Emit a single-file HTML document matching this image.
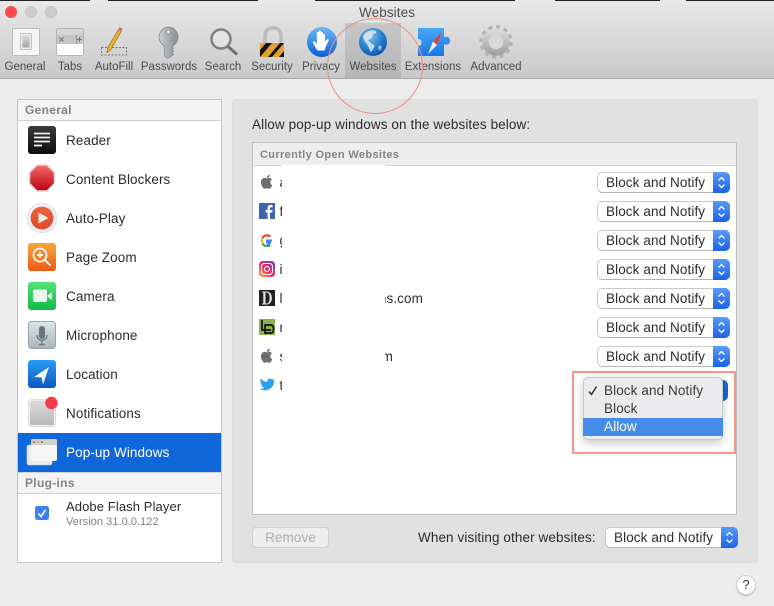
<!DOCTYPE html>
<html><head><meta charset="utf-8"><title>Websites</title>
<style>
*{box-sizing:border-box;margin:0;padding:0}
html,body{width:774px;height:606px;overflow:hidden}
body{position:relative;background:#ececec;font-family:"Liberation Sans",sans-serif;font-size:13.5px;color:#2b2b2b;letter-spacing:.1px}
.a{position:absolute}
.t{position:absolute;white-space:nowrap;line-height:16px}
.tb{position:absolute;top:61px;width:70px;text-align:center;font-size:11.5px;line-height:13px;color:#4a4a4a;letter-spacing:0;white-space:nowrap}
.s{position:absolute;left:66px;white-space:nowrap;line-height:16px}
.p{position:absolute;left:597px;width:133px;height:21px;background:#fff;border:1px solid #c9c9c9;border-bottom-color:#b5b5b5;border-radius:5px;line-height:19px;padding-left:8px;white-space:nowrap}
.p i{position:absolute;right:-1px;top:-1px;width:17px;height:21px;background:linear-gradient(#5a9bf8,#1a62e8);border-radius:0 5px 5px 0}
.p svg{position:absolute;right:-1px;top:-1px}
.u{position:absolute;left:279.5px;white-space:nowrap;line-height:16px}
</style></head><body>

<div class="a" style="left:0;top:0;width:774px;height:79px;background:linear-gradient(#e9e9e9,#c9c9c9);border-bottom:1px solid #a9a9a9"></div>
<div class="a" style="left:0;top:0;width:90px;height:1px;background:#222"></div>
<div class="a" style="left:108px;top:0;width:150px;height:1px;background:#222"></div>
<div class="a" style="left:315px;top:0;width:200px;height:1px;background:#222"></div>
<div class="a" style="left:555px;top:0;width:105px;height:1px;background:#222"></div>
<div class="a" style="left:686px;top:0;width:88px;height:1px;background:#222"></div>

<div class="a" style="left:5px;top:6px;width:12px;height:12px;border-radius:50%;background:#fb4b4e"></div>
<div class="a" style="left:25px;top:6px;width:12px;height:12px;border-radius:50%;background:#cdcdcd;border:1px solid #c2c2c2"></div>
<div class="a" style="left:45px;top:6px;width:12px;height:12px;border-radius:50%;background:#cdcdcd;border:1px solid #c2c2c2"></div>
<div class="t" style="left:359px;top:5px;color:#4b4b4b">Websites</div>

<div class="a" style="left:345px;top:23px;width:56px;height:55px;background:linear-gradient(#c6c6c6,#b6b6b6)"></div>

<svg class="a" style="left:0;top:20px" width="520" height="45" viewBox="0 20 520 45">
  <defs>
    <linearGradient id="g1" x1="0" y1="0" x2="0" y2="1"><stop offset="0" stop-color="#6cb6f2"/><stop offset="1" stop-color="#0a60d8"/></linearGradient>
    <radialGradient id="gl" cx=".4" cy=".3" r=".8"><stop offset="0" stop-color="#7fc0ee"/><stop offset=".6" stop-color="#1c78cc"/><stop offset="1" stop-color="#0a4a9a"/></radialGradient>
    <linearGradient id="gk" x1="0" y1="0" x2="1" y2="0"><stop offset="0" stop-color="#c9d1d4"/><stop offset=".5" stop-color="#a4adb0"/><stop offset="1" stop-color="#868e91"/></linearGradient>
    <linearGradient id="gb" x1="0" y1="0" x2="0" y2="1"><stop offset="0" stop-color="#45a8f8"/><stop offset="1" stop-color="#1a78e8"/></linearGradient>
    <linearGradient id="gg" x1="0" y1="0" x2="0" y2="1"><stop offset="0" stop-color="#d8d8d8"/><stop offset="1" stop-color="#a4a4a4"/></linearGradient>
  </defs>
  <!-- General -->
  <rect x="12.5" y="28.5" width="27" height="27" fill="#f6f6f6" stroke="#bcbcbc"/>
  <rect x="20.5" y="33.5" width="11" height="16" fill="#eee" stroke="#c2c2c2" rx="1"/>
  <rect x="22.5" y="35.5" width="7" height="12" fill="url(#gg)"/>
  <!-- Tabs -->
  <rect x="56.5" y="28.5" width="27" height="27" rx="2" fill="#fff" stroke="#b5b5b5"/>
  <rect x="57" y="29" width="26" height="6" fill="#d5d5d5"/>
  <rect x="57" y="35" width="26" height="9" fill="#c4c4c4"/>
  <path d="M76.5 35v9" stroke="#999"/>
  <path d="M59.5 37.5l4 4M63.5 37.5l-4 4M77 39.5h5M79.5 37v5" stroke="#777" fill="none"/>
  <!-- AutoFill -->
  <rect x="101.5" y="47.5" width="25" height="7.5" fill="none" stroke="#777" stroke-dasharray="2 1.5"/>
  <path d="M107 52.500l.3-4 11-19 3 1.800-11 19z" fill="#f0b030" stroke="#8a6510" stroke-width=".6"/>
  <path d="M118.500 29l1-1.800 3 1.800-1 1.800z" fill="#d8568a"/>
  <!-- Key -->
  <path d="M169 27a10 10 0 0 0-4.500 18.900V56l3.500 2.500 3.500-2.500 2-1.500-1.500-1.500 1.500-1.500-1.500-1.500 1.500-1.500-1-1v-1.600A10 10 0 0 0 169 27z" fill="url(#gk)" stroke="#7d8588" stroke-width=".7"/>
  <circle cx="168.500" cy="32" r="2" fill="#e4e4e4" stroke="#777" stroke-width=".6"/>
  <!-- Search -->
  <circle cx="221" cy="39" r="9.500" fill="#f2f2f2" fill-opacity=".4" stroke="#808080" stroke-width="2.500"/>
  <path d="M228 46.500l9 8" stroke="#707070" stroke-width="3"/>
  <!-- Security -->
  <path d="M265 43v-7c0-11 16-11 16 0v7" fill="none" stroke="#bcbcbc" stroke-width="3.500"/>
  <rect x="260" y="43" width="24" height="14" rx="1" fill="#e2a030"/>
  <path d="M260 50l6-7h6l-12 14zM268 57l12-14h4l-12 14zM279 57l5-6v6z" fill="#111"/>
  <!-- Privacy -->
  <circle cx="322" cy="42" r="15" fill="url(#g1)"/>
  <path d="M317 50l-4-7c-.7-1.500 1-2.500 2-1.300l1.800 2V33c0-1.500 2-1.500 2 0v-1.500c0-1.500 2.200-1.500 2.200 0V33c0-1.500 2-1.500 2 0v2c0-1.500 2-1.500 2 0v6.500l1.800-2c1.200-1 2.500 0 1.700 1.500l-2.500 5-1.500 4.500h-6.500z" fill="#fff"/>
  <!-- Websites globe -->
  <circle cx="373" cy="42" r="14" fill="url(#gl)"/>
  <path d="M363 36c3-5 9-7 13-5 1 2-1 3-3 3 0 3-2 5-5 6l4 4c2 0 3 2 2 4-2 3-3 5-4 3-1-3-2-5-3-7-2-2-4-5-4-8z" fill="#f2f2ea" fill-opacity=".75"/>
  <path d="M378 46c2-1 4 0 4 2l-3 3z" fill="#eee" fill-opacity=".6"/>
  <!-- Extensions -->
  <path d="M418 28h26v9h2c3-1 4 2 4 4s-1 4-4 3.500h-2V56h-26V46c2.500 0 3.500-1.500 3.500-3.500S420.500 39 418 39z" fill="url(#gb)"/>
  <path d="M441.500 33L433 41.500l4 3.500z" fill="#e8402a"/>
  <path d="M428 54l5-12.500 4 3.500z" fill="#f2f2f2"/>
  <!-- Advanced -->
  <circle cx="496" cy="42" r="15" fill="none" stroke="#b4b4b4" stroke-width="3.500" stroke-dasharray="4 3.850"/>
  <circle cx="496" cy="42" r="10.500" fill="none" stroke="url(#gg)" stroke-width="6.500"/>
  <circle cx="496" cy="42" r="7.200" fill="#d8d8d8"/>
</svg>

<div class="tb" style="left:-10px">General</div>
<div class="tb" style="left:35px">Tabs</div>
<div class="tb" style="left:79px">AutoFill</div>
<div class="tb" style="left:134px">Passwords</div>
<div class="tb" style="left:188px">Search</div>
<div class="tb" style="left:237px">Security</div>
<div class="tb" style="left:286px">Privacy</div>
<div class="tb" style="left:338px">Websites</div>
<div class="tb" style="left:398px">Extensions</div>
<div class="tb" style="left:461px">Advanced</div>

<!-- sidebar -->
<div class="a" style="left:17px;top:99px;width:205px;height:464px;background:#fff;border:1px solid #c4c4c4"></div>
<div class="a" style="left:18px;top:100px;width:203px;height:21px;background:#f4f4f4;border-bottom:1px solid #d0d0d0"></div>
<div class="t" style="left:25px;top:102px;font-weight:bold;font-size:12px;color:#848484;letter-spacing:.3px">General</div>
<div class="a" style="left:18px;top:433px;width:203px;height:39px;background:#0f67da"></div>
<div class="a" style="left:18px;top:472px;width:203px;height:22px;background:#f4f4f4;border-top:1px solid #d0d0d0;border-bottom:1px solid #d0d0d0"></div>
<div class="t" style="left:25px;top:475px;font-weight:bold;font-size:12px;color:#848484;letter-spacing:.3px">Plug-ins</div>

<div class="s" style="top:133px">Reader</div>
<div class="s" style="top:172px">Content Blockers</div>
<div class="s" style="top:211px">Auto-Play</div>
<div class="s" style="top:250px">Page Zoom</div>
<div class="s" style="top:289px">Camera</div>
<div class="s" style="top:328px">Microphone</div>
<div class="s" style="top:367px">Location</div>
<div class="s" style="top:406px">Notifications</div>
<div class="s" style="top:445px;color:#fff">Pop-up Windows</div>
<div class="s" style="top:499px;font-size:13px">Adobe Flash Player</div>
<div class="s" style="top:515px;font-size:11px;color:#808080;line-height:14px;letter-spacing:.05px">Version 31.0.0.122</div>

<svg class="a" style="left:0;top:120px" width="60" height="420" viewBox="0 120 60 420">
  <defs>
    <linearGradient id="r1" x1="0" y1="0" x2="0" y2="1"><stop offset="0" stop-color="#3a3a3a"/><stop offset="1" stop-color="#0d0d0d"/></linearGradient>
    <linearGradient id="r2" x1="0" y1="0" x2="0" y2="1"><stop offset="0" stop-color="#f76a6a"/><stop offset="1" stop-color="#bb0010"/></linearGradient>
    <linearGradient id="r3" x1="0" y1="0" x2="0" y2="1"><stop offset="0" stop-color="#ee6540"/><stop offset="1" stop-color="#dd4a2a"/></linearGradient>
    <linearGradient id="r4" x1="0" y1="0" x2="0" y2="1"><stop offset="0" stop-color="#fba63c"/><stop offset="1" stop-color="#ec5a18"/></linearGradient>
    <linearGradient id="r5" x1="0" y1="0" x2="0" y2="1"><stop offset="0" stop-color="#55e27a"/><stop offset="1" stop-color="#10bb48"/></linearGradient>
    <linearGradient id="r6" x1="0" y1="0" x2="0" y2="1"><stop offset="0" stop-color="#d8e8ee"/><stop offset="1" stop-color="#a8b4b8"/></linearGradient>
    <linearGradient id="r7" x1="0" y1="0" x2="0" y2="1"><stop offset="0" stop-color="#2a9cf2"/><stop offset="1" stop-color="#0a58c0"/></linearGradient>
    <linearGradient id="r8" x1="0" y1="0" x2="0" y2="1"><stop offset="0" stop-color="#dcdcdc"/><stop offset="1" stop-color="#b8b8b8"/></linearGradient>
  </defs>
  <!-- reader -->
  <rect x="28" y="126" width="28" height="28" rx="3" fill="url(#r1)"/>
  <path d="M34 133.500h16M34 137.500h16M34 141.500h16M34 145.500h8" stroke="#f2f2f2" stroke-width="1.700"/>
  <!-- blockers -->
  <path d="M37 165h10l7.500 7.500v11L47 191H37l-7.500-7.500v-11z" fill="url(#r2)" stroke="#dcdcdc" stroke-width="1.500"/>
  <!-- autoplay -->
  <circle cx="42" cy="218" r="14.500" fill="#f6f6f6" stroke="#dcdcdc"/>
  <circle cx="42" cy="218" r="11.500" fill="url(#r3)"/>
  <path d="M38.500 212.500l10 5.500-10 5.500z" fill="#f4ece8"/>
  <!-- zoom -->
  <rect x="28" y="243" width="28" height="28" rx="3" fill="url(#r4)"/>
  <circle cx="40" cy="255" r="6.500" fill="none" stroke="#fff" stroke-width="1.700"/>
  <path d="M37 255h6M40 252v6M45 260l5.500 5.500" stroke="#fff" stroke-width="1.700"/>
  <!-- camera -->
  <rect x="28" y="282" width="28" height="28" rx="3" fill="url(#r5)"/>
  <rect x="33" y="289.500" width="14" height="12.500" rx="2" fill="#eef6ef"/>
  <path d="M47 296l5-4v8z" fill="#eef6ef"/>
  <!-- mic -->
  <rect x="28.500" y="321.500" width="27" height="27" rx="3" fill="url(#r6)" stroke="#9aa4a8"/>
  <rect x="39" y="326" width="6" height="13" rx="3" fill="#6a7478"/>
  <path d="M37 335c0 7 10 7 10 0M42 340v4M39 344.500h6" fill="none" stroke="#6a7478" stroke-width="1.200"/>
  <!-- location -->
  <rect x="28" y="360" width="28" height="28" rx="3" fill="url(#r7)"/>
  <path d="M49 367l-15 10 7.500.5 1.500 7z" fill="#f2f6fa"/>
  <!-- notifications -->
  <rect x="28.500" y="399.500" width="27" height="27" rx="3" fill="#f0f0f0" stroke="#dcdcdc"/>
  <rect x="30" y="401" width="24" height="24" rx="1.500" fill="url(#r8)"/>
  <circle cx="51.500" cy="403" r="6.200" fill="#f23a48"/>
  <!-- popup -->
  <rect x="27" y="445" width="25" height="20" rx="2" fill="#e9e9e9" stroke="#cfd8e6" stroke-width=".6"/>
  <rect x="31" y="439" width="26" height="22" rx="2" fill="#f6f6f6"/>
  <path d="M31 445v-4a2 2 0 0 1 2-2h22a2 2 0 0 1 2 2v4z" fill="#d0d0d0"/>
  <circle cx="34" cy="442" r="1.100" fill="#e85a50"/><circle cx="38" cy="442" r="1.100" fill="#e8b040"/><circle cx="42" cy="442" r="1.100" fill="#50b050"/>
  <!-- checkbox -->
  <rect x="35" y="506" width="14" height="14" rx="2.500" fill="#3a82f0"/>
  <path d="M38.500 513.500l2.500 3 4.500-6.500" fill="none" stroke="#fff" stroke-width="1.600"/>
</svg>

<!-- right panel -->
<div class="a" style="left:232px;top:99px;width:526px;height:464px;background:#e1e1e1;border:1px solid #dcdcdc;border-radius:4px"></div>
<div class="t" style="left:252px;top:117px">Allow pop-up windows on the websites below:</div>
<div class="a" style="left:252px;top:142px;width:485px;height:373px;background:#fff;border:1px solid #c0c0c0"></div>
<div class="a" style="left:253px;top:143px;width:483px;height:23px;background:#eeeeee;border-bottom:1px solid #d6d6d6"></div>
<div class="t" style="left:260px;top:148px;font-weight:bold;font-size:11px;line-height:15px;color:#848484;letter-spacing:.35px">Currently Open Websites</div>

<div class="u" style="top:175px">apple.com</div>
<div class="u" style="top:204px">facebook.com</div>
<div class="u" style="top:233px">google.com</div>
<div class="u" style="top:262px">instagram.com</div>
<div class="u" style="top:291px">l</div>
<div class="u" style="top:320px">news.com</div>
<div class="u" style="top:349px">support.com</div>
<div class="u" style="top:378px">twitter.com</div>
<div class="a" style="left:282px;top:165px;width:103px;height:232px;background:#fff"></div>
<div class="t" style="left:378px;top:291px;width:45px;text-align:right;overflow:hidden">ns.com</div>
<div class="a" style="left:378px;top:291px;width:7px;height:16px;background:#fff"></div>
<div class="t" style="left:378px;top:349px;width:15px;text-align:right;overflow:hidden">m</div>
<div class="a" style="left:378px;top:349px;width:7px;height:16px;background:#fff"></div>

<svg class="a" style="left:255px;top:170px" width="25" height="225" viewBox="255 170 25 225">
  <!-- apple -->
  <g fill="#6e6e6e"><path d="M267 178.500c-1.500-.8-2.800-.7-3.800-.2-2 1-3 4-1.500 7.200.8 1.800 2 3.300 3 3.300.8 0 1.300-.6 2.300-.6s1.500.6 2.300.6c1.200 0 2.300-1.800 3-3.500-2.500-1-2.700-4.800-.2-6-1-1.400-3-1.600-5.100-.8z"/><path d="M267 178c0-1.800 1.300-3.200 2.800-3.300.1 1.800-1.200 3.300-2.800 3.300z"/></g>
  <!-- facebook -->
  <rect x="259" y="203" width="16" height="16" fill="#3f63ae"/>
  <path d="M270 219v-6.500h2.200l.4-2.500H270v-1.500c0-.8.300-1.300 1.300-1.300h1.300v-2.200c-2.800-.4-5 .2-5 3.300V210h-2v2.500h2v6.500z" fill="#fff"/>
  <!-- google -->
  <path d="M272 240.500h-5v2h3c-.4 1.500-1.500 2.300-3 2.300" fill="none" stroke="#4285f4" stroke-width="2"/>
  <path d="M267 245c-1.600 0-2.900-.9-3.600-2.300l-1.800 1.300c1.200 2.200 3 3.200 5.400 3.200 1.700 0 3-.6 4-1.500l-1.700-1.300c-.6.400-1.300.6-2.300.6z" fill="#34a853"/>
  <path d="M263 240.500c0-.7.100-1.200.4-1.800l-1.800-1.400c-.8 1.700-.8 4.800 0 6.500l1.800-1.400c-.3-.6-.4-1.200-.4-1.900z" fill="#fbbc05"/>
  <path d="M267 236.500c1 0 1.800.3 2.500 1l1.700-1.700c-1-1-2.500-1.600-4.200-1.600-2.400 0-4.300 1-5.400 3.100l1.800 1.400c.7-1.400 2-2.200 3.600-2.200z" fill="#ea4335"/>
  <!-- instagram -->
  <defs><linearGradient id="ig" x1="0" y1="1" x2="1" y2="0"><stop offset="0" stop-color="#fdb040"/><stop offset=".45" stop-color="#e8306a"/><stop offset="1" stop-color="#7a3ac0"/></linearGradient></defs>
  <rect x="259" y="261" width="16" height="16" rx="3.500" fill="url(#ig)"/>
  <rect x="261.500" y="263.500" width="11" height="11" rx="3" fill="none" stroke="#fff" stroke-width="1.100"/>
  <circle cx="267" cy="269" r="2.500" fill="none" stroke="#fff" stroke-width="1.100"/>
  <!-- D -->
  <rect x="259" y="290" width="16" height="16" fill="#222"/>
  <path d="M262 291.500h5c6.500 0 6.500 13 0 13h-5v-.8l1.300-.4v-10.600l-1.300-.4zM265.500 292.500v11h1.500c3.500 0 3.500-11 0-11z" fill="#e4e4e4" fill-rule="evenodd"/>
  <!-- LD -->
  <rect x="259" y="319" width="16" height="16" fill="#8cb050"/>
  <path d="M262 320v10h9M265 325h6c2 0 2.500 2 2.500 4s-.5 4-2.500 4h-6z" fill="none" stroke="#111" stroke-width="1.700"/>
  <!-- apple 2 -->
  <g transform="translate(0 174)" fill="#6e6e6e"><path d="M267 178.500c-1.500-.8-2.800-.7-3.800-.2-2 1-3 4-1.500 7.200.8 1.800 2 3.300 3 3.300.8 0 1.300-.6 2.300-.6s1.500.6 2.300.6c1.200 0 2.300-1.800 3-3.500-2.500-1-2.700-4.800-.2-6-1-1.400-3-1.600-5.100-.8z"/><path d="M267 178c0-1.800 1.300-3.200 2.800-3.300.1 1.800-1.200 3.300-2.800 3.300z"/></g>
  <!-- twitter -->
  <path d="M274.500 380c-.6.300-1.200.4-1.800.5.600-.4 1.100-1 1.400-1.700-.6.300-1.300.6-2 .7-1.800-2-5.500-.5-4.800 2.300-2.700-.1-5-1.400-6.500-3.300-.9 1.400-.4 3.300.9 4.200-.5 0-1-.2-1.400-.4 0 1.500 1 2.800 2.500 3.100-.5.100-.9.100-1.400 0 .4 1.200 1.500 2.100 2.900 2.100-1.400 1.100-3.200 1.600-4.800 1.400 6.500 4 15-.3 14.600-8.400.6-.4 1.100-1 1.500-1.500z" fill="#2ca0ee"/>
</svg>

<!-- popups -->
<div class="p" style="top:172px">Block and Notify<i></i><svg width="17" height="21"><path d="M5.500 8.500l3-3 3 3M5.500 12.500l3 3 3-3" fill="none" stroke="#fff" stroke-width="1.300"/></svg></div>
<div class="p" style="top:201px">Block and Notify<i></i><svg width="17" height="21"><path d="M5.500 8.500l3-3 3 3M5.500 12.500l3 3 3-3" fill="none" stroke="#fff" stroke-width="1.300"/></svg></div>
<div class="p" style="top:230px">Block and Notify<i></i><svg width="17" height="21"><path d="M5.500 8.500l3-3 3 3M5.500 12.500l3 3 3-3" fill="none" stroke="#fff" stroke-width="1.300"/></svg></div>
<div class="p" style="top:259px">Block and Notify<i></i><svg width="17" height="21"><path d="M5.500 8.500l3-3 3 3M5.500 12.500l3 3 3-3" fill="none" stroke="#fff" stroke-width="1.300"/></svg></div>
<div class="p" style="top:288px">Block and Notify<i></i><svg width="17" height="21"><path d="M5.500 8.500l3-3 3 3M5.500 12.500l3 3 3-3" fill="none" stroke="#fff" stroke-width="1.300"/></svg></div>
<div class="p" style="top:317px">Block and Notify<i></i><svg width="17" height="21"><path d="M5.500 8.500l3-3 3 3M5.500 12.500l3 3 3-3" fill="none" stroke="#fff" stroke-width="1.300"/></svg></div>
<div class="p" style="top:346px">Block and Notify<i></i><svg width="17" height="21"><path d="M5.500 8.500l3-3 3 3M5.500 12.500l3 3 3-3" fill="none" stroke="#fff" stroke-width="1.300"/></svg></div>

<!-- menu -->
<div class="a" style="left:700px;top:380px;width:28px;height:21px;background:#1a62e0;border-radius:0 5px 5px 0"></div>
<div class="a" style="left:583px;top:377px;width:140px;height:63px;background:#ebebed;border:1px solid #c8c8c8;border-radius:5px;box-shadow:0 3px 9px rgba(0,0,0,.22)"></div>
<div class="a" style="left:583px;top:418px;width:140px;height:18px;background:#458ce9"></div>
<svg class="a" style="left:587px;top:385px" width="12" height="12"><path d="M2 6.500l2.500 3L9.500 1.500" fill="none" stroke="#333" stroke-width="1.500"/></svg>
<div class="t" style="left:604px;top:383px;color:#3a3a3a">Block and Notify</div>
<div class="t" style="left:604px;top:401px;color:#3a3a3a">Block</div>
<div class="t" style="left:604px;top:419px;color:#fff">Allow</div>

<!-- bottom -->
<div class="a" style="left:252px;top:527px;width:77px;height:21px;background:#eeeeee;border:1px solid #d0d0d0;border-radius:4px;text-align:center;line-height:19px;color:#adadad">Remove</div>
<div class="t" style="left:418px;top:530px">When visiting other websites:</div>
<div class="p" style="left:605px;top:527px">Block and Notify<i></i><svg width="17" height="21"><path d="M5.500 8.500l3-3 3 3M5.500 12.500l3 3 3-3" fill="none" stroke="#fff" stroke-width="1.300"/></svg></div>

<div class="a" style="left:736px;top:575px;width:20px;height:20px;border-radius:50%;background:#fff;border:1px solid #cfcfcf;box-shadow:0 1px 1px rgba(0,0,0,.18);text-align:center;line-height:18px;font-size:13px;color:#333;letter-spacing:0">?</div>

<!-- annotations -->
<div class="a" style="left:327px;top:18px;width:96px;height:96px;border-radius:50%;border:1.500px solid #f08c7e"></div>
<div class="a" style="left:572px;top:371px;width:164px;height:83px;border:2px solid #f6958a"></div>
</body></html>
